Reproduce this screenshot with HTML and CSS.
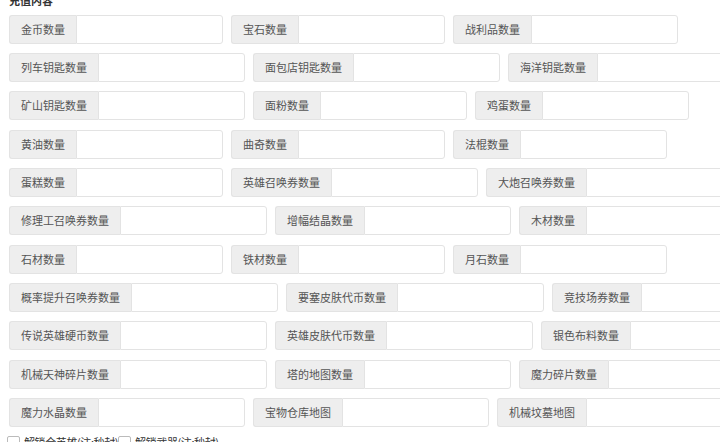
FILE: index.html
```html
<!DOCTYPE html>
<html lang="zh-CN">
<head>
<meta charset="utf-8">
<title>充值内容</title>
<link rel="stylesheet" href="styles.css">
</head>
<body>
<div class="panel">
  <div class="title">充值内容</div>
  <div class="row">
    <div class="group"><span class="addon">金币数量</span><input class="field" type="text"></div>
    <div class="group"><span class="addon">宝石数量</span><input class="field" type="text"></div>
    <div class="group"><span class="addon">战利品数量</span><input class="field" type="text"></div>
  </div>
  <div class="row">
    <div class="group"><span class="addon">列车钥匙数量</span><input class="field" type="text"></div>
    <div class="group"><span class="addon">面包店钥匙数量</span><input class="field" type="text"></div>
    <div class="group"><span class="addon">海洋钥匙数量</span><input class="field" type="text"></div>
  </div>
  <div class="row">
    <div class="group"><span class="addon">矿山钥匙数量</span><input class="field" type="text"></div>
    <div class="group"><span class="addon">面粉数量</span><input class="field" type="text"></div>
    <div class="group"><span class="addon">鸡蛋数量</span><input class="field" type="text"></div>
  </div>
  <div class="row">
    <div class="group"><span class="addon">黄油数量</span><input class="field" type="text"></div>
    <div class="group"><span class="addon">曲奇数量</span><input class="field" type="text"></div>
    <div class="group"><span class="addon">法棍数量</span><input class="field" type="text"></div>
  </div>
  <div class="row">
    <div class="group"><span class="addon">蛋糕数量</span><input class="field" type="text"></div>
    <div class="group"><span class="addon">英雄召唤券数量</span><input class="field" type="text"></div>
    <div class="group"><span class="addon">大炮召唤券数量</span><input class="field" type="text"></div>
  </div>
  <div class="row">
    <div class="group"><span class="addon">修理工召唤券数量</span><input class="field" type="text"></div>
    <div class="group"><span class="addon">增幅结晶数量</span><input class="field" type="text"></div>
    <div class="group"><span class="addon">木材数量</span><input class="field" type="text"></div>
  </div>
  <div class="row">
    <div class="group"><span class="addon">石材数量</span><input class="field" type="text"></div>
    <div class="group"><span class="addon">铁材数量</span><input class="field" type="text"></div>
    <div class="group"><span class="addon">月石数量</span><input class="field" type="text"></div>
  </div>
  <div class="row">
    <div class="group"><span class="addon">概率提升召唤券数量</span><input class="field" type="text"></div>
    <div class="group"><span class="addon">要塞皮肤代币数量</span><input class="field" type="text"></div>
    <div class="group"><span class="addon">竞技场券数量</span><input class="field" type="text"></div>
  </div>
  <div class="row">
    <div class="group"><span class="addon">传说英雄硬币数量</span><input class="field" type="text"></div>
    <div class="group"><span class="addon">英雄皮肤代币数量</span><input class="field" type="text"></div>
    <div class="group"><span class="addon">银色布料数量</span><input class="field" type="text"></div>
  </div>
  <div class="row">
    <div class="group"><span class="addon">机械天神碎片数量</span><input class="field" type="text"></div>
    <div class="group"><span class="addon">塔的地图数量</span><input class="field" type="text"></div>
    <div class="group"><span class="addon">魔力碎片数量</span><input class="field" type="text"></div>
  </div>
  <div class="row">
    <div class="group"><span class="addon">魔力水晶数量</span><input class="field" type="text"></div>
    <div class="group"><span class="addon">宝物仓库地图</span><input class="field" type="text"></div>
    <div class="group"><span class="addon">机械坟墓地图</span><input class="field" type="text"></div>
  </div>
  <div class="checks">
    <label class="check"><span class="box"></span>解锁全英雄(注:秒封)</label>
    <label class="check"><span class="box"></span>解锁武器(注:秒封)</label>
  </div>
</div>
</body>
</html>
```

FILE: styles.css
```css
html, body {
  margin: 0;
  padding: 0;
  background: #ffffff;
  overflow: hidden;
}

body {
  width: 720px;
  height: 442px;
  font-family: "Noto Sans CJK SC", "Noto Sans", sans-serif;
  font-size: 11px;
  color: #555555;
}

.panel {
  padding-left: 9px;
  overflow: hidden;
  height: 442px;
}

.title {
  margin-top: -8px;
  height: 16px;
  line-height: 16px;
  margin-bottom: 6.5px;
  font-weight: bold;
  color: #333333;
}

.row {
  display: flex;
  gap: 8px;
  margin-bottom: 9.35px;
  white-space: nowrap;
  width: 1000px;
}

.group {
  display: flex;
  height: 29px;
  flex: none;
}

.addon {
  display: flex;
  align-items: center;
  padding: 0 11px;
  background: #eeeeee;
  border: 1px solid #e3e3e3;
  border-right: none;
  border-radius: 3px 0 0 3px;
  color: #555555;
  line-height: 1;
}

.field {
  box-sizing: border-box;
  width: 147px;
  height: 29px;
  margin: 0;
  padding: 0 9px;
  border: 1px solid #e3e3e3;
  border-radius: 0 3px 3px 0;
  background: #ffffff;
  font: inherit;
  outline: none;
}

.checks {
  display: flex;
  gap: 2px;
  margin-top: -2px;
  color: #333333;
}

.check {
  display: flex;
  align-items: center;
  gap: 4px;
  height: 16px;
  letter-spacing: -0.4px;
}

.box {
  display: inline-block;
  width: 11px;
  height: 11px;
  border: 1px solid #bbbbbb;
  border-radius: 2px;
  background: #ffffff;
  margin-left: -2px;
}
```
